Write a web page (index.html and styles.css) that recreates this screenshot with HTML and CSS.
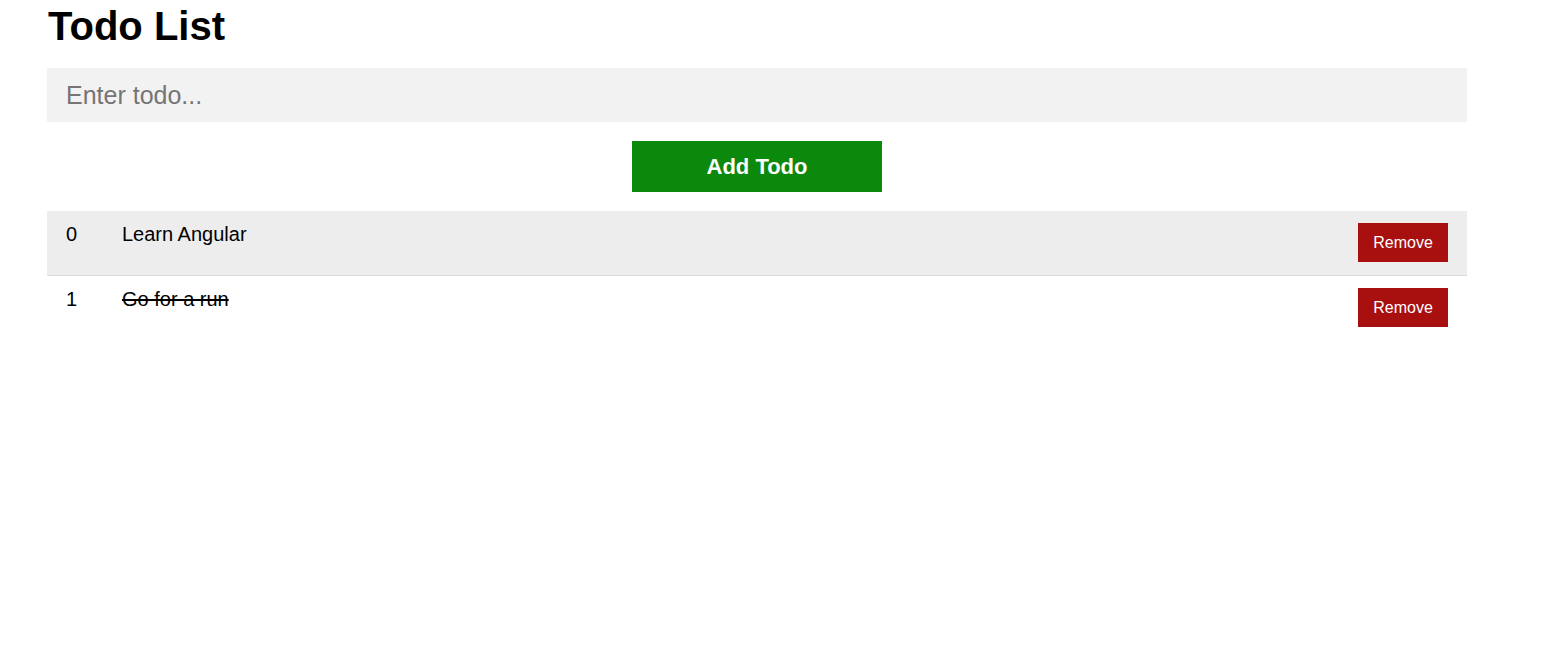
FILE: index.html
```html
<!DOCTYPE html>
<html>
<head>
<meta charset="utf-8">
<title>Todo List</title>
<link rel="stylesheet" href="styles.css">
</head>
<body>
<div class="app">
  <h1 class="title">Todo List</h1>
  <input class="todo-input" type="text" placeholder="Enter todo...">
  <div class="add-row">
    <button class="add-btn">Add Todo</button>
  </div>
  <ul class="todo-list">
    <li class="todo-item odd">
      <span class="todo-index">0</span>
      <span class="todo-text">Learn Angular</span>
      <button class="remove-btn">Remove</button>
    </li>
    <li class="todo-item">
      <span class="todo-index">1</span>
      <span class="todo-text done">Go for a run</span>
      <button class="remove-btn">Remove</button>
    </li>
  </ul>
</div>
</body>
</html>
```

FILE: styles.css
```css
* { box-sizing: border-box; }
body {
  margin: 0;
  background: #fff;
  font-family: "Liberation Sans", Arial, sans-serif;
  color: #000;
}
.app {
  width: 1420px;
  margin-left: 47px;
  padding-top: 4px;
}
.title {
  margin: 0 0 19px 1px;
  font-size: 40px;
  font-weight: bold;
  line-height: 45px;
}
.todo-input {
  display: block;
  width: 100%;
  height: 54px;
  border: none;
  outline: none;
  background: #f2f2f2;
  padding: 0 19px;
  font-family: "Liberation Sans", Arial, sans-serif;
  font-size: 25px;
  color: #000;
}
.todo-input::placeholder { color: #757575; }
.add-row {
  display: flex;
  justify-content: center;
  padding: 19px 0;
}
.add-btn {
  width: 250px;
  height: 51px;
  border: none;
  background: #0a890c;
  color: #fff;
  font-family: "Liberation Sans", Arial, sans-serif;
  font-size: 22px;
  font-weight: bold;
  cursor: pointer;
}
.todo-list {
  list-style: none;
  margin: 0;
  padding: 0;
}
.todo-item {
  display: flex;
  align-items: flex-start;
  padding: 12px 19px 13px;
  font-size: 20px;
}
.todo-item.odd {
  background: #ededed;
  border-bottom: 1px solid #dcdcdc;
}
.todo-index {
  width: 56px;
  line-height: 20px;
  padding-top: 1px;
}
.todo-text {
  flex: 1;
  line-height: 20px;
  padding-top: 1px;
}
.todo-text.done { text-decoration: line-through; }
.remove-btn {
  width: 90px;
  height: 39px;
  border: none;
  background: #a80f0f;
  color: #fff;
  font-family: "Liberation Sans", Arial, sans-serif;
  font-size: 16px;
  cursor: pointer;
}
```
